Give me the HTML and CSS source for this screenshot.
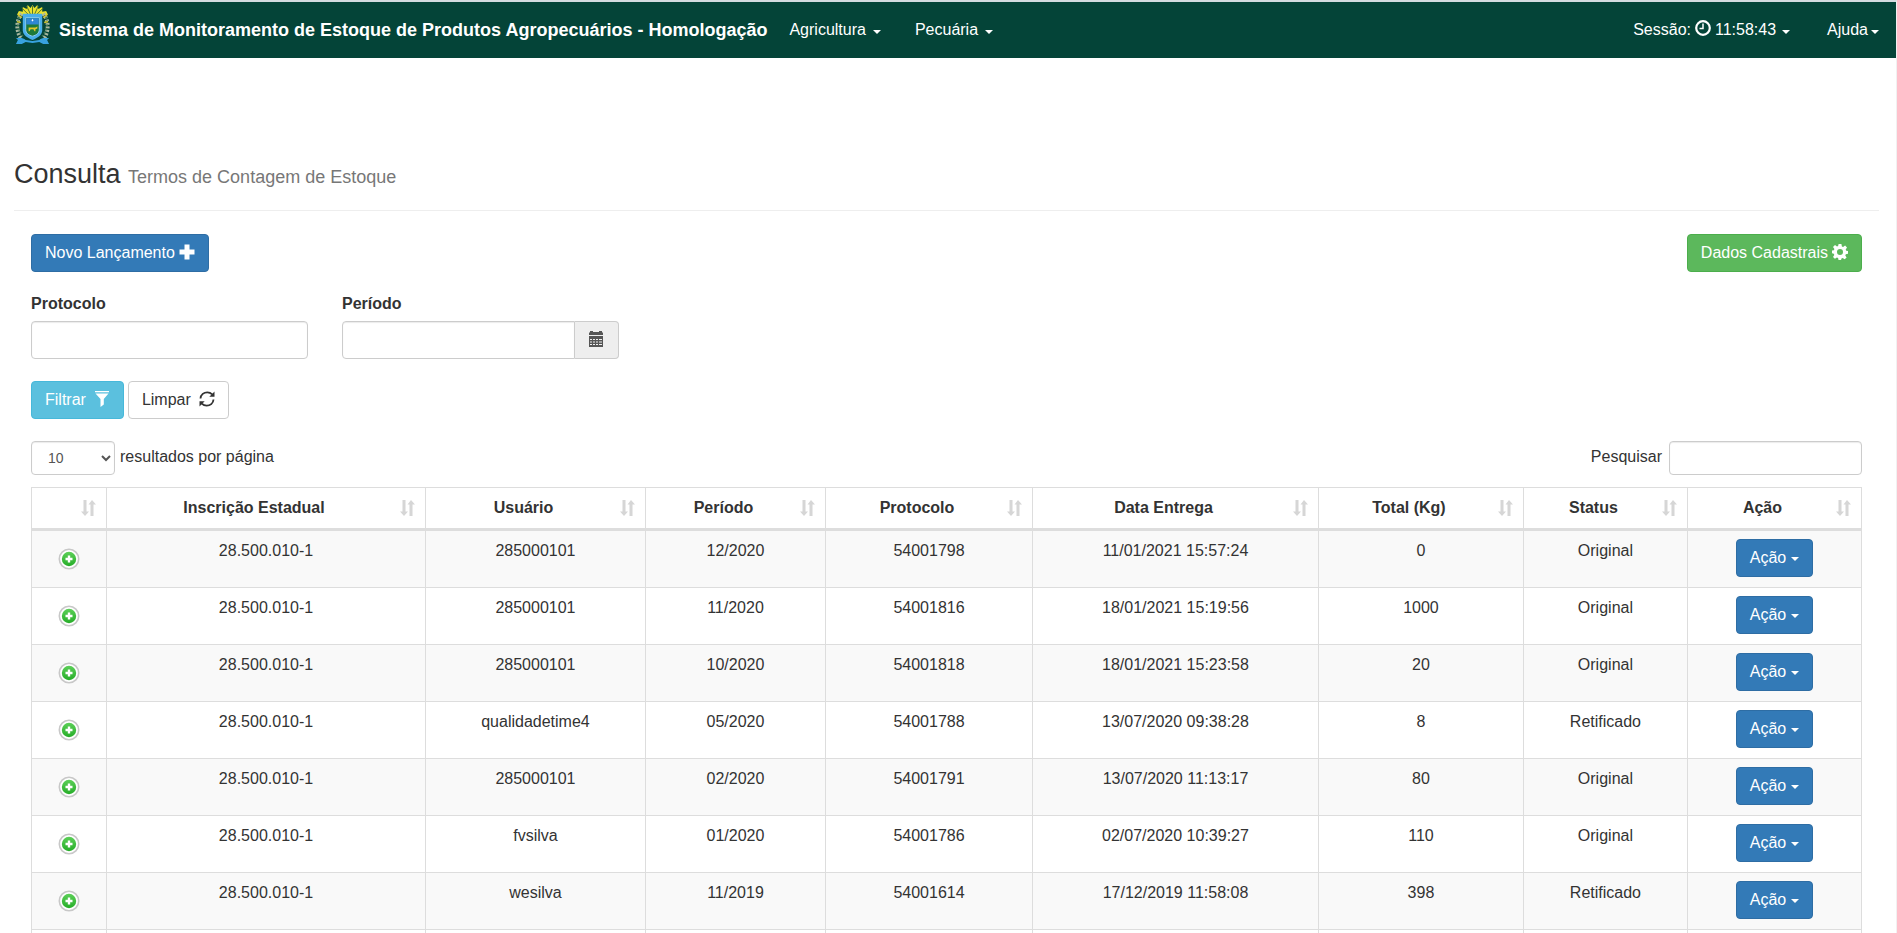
FILE: index.html
```
<!DOCTYPE html>
<html lang="pt-BR">
<head>
<meta charset="utf-8">
<title>Consulta - Termos de Contagem de Estoque</title>
<link rel="stylesheet" href="styles.css">
</head>
<body>
<svg class="sprite" aria-hidden="true">
  <symbol id="sort" viewBox="0 0 15 16"><path d="M2.500 0h3v11.500H8L4 16 0 11.500h2.500zM9.500 16h3V4.500H15L11 0 7.500 4.500h2z"/></symbol>
  <symbol id="more" viewBox="0 0 22 22">
    <circle cx="11" cy="11" r="9.700" fill="#fff" stroke="#c8c8c8" stroke-width="1.600"/>
    <circle cx="11" cy="11" r="7.200" fill="url(#green)"/>
    <path d="M9.800 7.500h2.400v2.300h2.300v2.400h-2.300v2.300H9.800v-2.300H7.500V9.800h2.300z" fill="#fff"/>
  </symbol>
  <linearGradient id="green" x1="0" y1="0" x2="0" y2="1"><stop offset="0" stop-color="#5ccf58"/><stop offset="1" stop-color="#26ad28"/></linearGradient>
</svg>

<header class="navbar">
  <a class="brand" href="#">
    <svg class="crest" viewBox="0 0 36 40" aria-hidden="true">
      <path d="M18 12 2 10l2-4 4 1 0-5 4 2 1-4 3 3 2-3 2 3 3-3 1 4 4-2 0 5 4-1 2 4z" fill="#e9e22f"/>
      <path d="M18 14 7 3M18 14 12 1M18 14V1M18 14 24 1M18 14 29 3" stroke="#55752c" stroke-width="1"/>
      <path d="M7 9C1 15 1 27 6 34M29 9c6 6 6 18 1 25" fill="none" stroke="#a9b8a0" stroke-width="4" stroke-dasharray="2 1.500"/>
      <path d="M4 12c-2 8-1 14 4 20M32 12c2 8 1 14-4 20" fill="none" stroke="#3d7553" stroke-width="2" stroke-dasharray="2 2"/>
      <path d="M3 10l4 3M29 13l4-3M2 17l4 1M30 18l4-1" stroke="#d5c52c" stroke-width="1.500"/>
      <path d="M1 34c4 0 7-1 10 2l7 1 7-1c3-3 6-2 10-2l-2 2 2 4h-6l-4-2-7 1-7-1-4 2H1l2-4z" fill="#38a2df"/>
      <path d="M8 9h20v17c0 5-5 8-10 10-5-2-10-5-10-10z" fill="#48aeea"/>
      <path d="M11 13h14v12c0 4-3 6-7 7-4-1-7-3-7-7z" fill="#1d7a3b" stroke="#8fcdf2"/>
      <path d="M11.500 13.500h13V20h-13z" fill="#2f87d3"/>
      <path d="M14 23h7l2-1v2l-2 1v2h-1l-1-2h-3l-1 2h-1z" fill="#e0c727"/>
      <path d="m18 14 1 2-1 1-1-1z" fill="#fff"/>
    </svg>
    <span>Sistema de Monitoramento de Estoque de Produtos Agropecuários - Homologação</span>
  </a>
  <nav class="menu">
    <a href="#">Agricultura <i class="caret"></i></a>
    <a href="#">Pecuária <i class="caret"></i></a>
  </nav>
  <nav class="menu menu-right">
    <a href="#">Sessão:
      <svg class="clock" viewBox="0 0 16 16" aria-hidden="true"><circle cx="8" cy="8" r="6.800" fill="none" stroke="#fff" stroke-width="2.200"/><path d="M8 3.500V8.500H4.500" fill="none" stroke="#fff" stroke-width="1.500"/></svg>
      11:58:43 <i class="caret"></i></a>
    <a class="tight" href="#">Ajuda<i class="caret"></i></a>
  </nav>
</header>

<main>
  <h1>Consulta <small>Termos de Contagem de Estoque</small></h1>
  <div class="content">
    <div class="bar">
      <button class="btn primary" type="button">Novo Lançamento
        <svg class="icon" viewBox="0 0 16 16" aria-hidden="true"><path d="M5.500 .5h5v5h5v5h-5v5h-5v-5h-5v-5h5z"/></svg></button>
      <button class="btn success" type="button">Dados Cadastrais
        <svg class="icon" viewBox="0 0 16 16" aria-hidden="true"><path fill-rule="evenodd" d="M6.600 0h2.800l.5 2.400 1.200.5 2-1.400 1.900 2-1.300 2 .5 1.200 1.800.4v2.600l-2.200.5-.5 1.200 1.300 2-1.900 1.900-2-1.300-1.200.5L9 16H6.500l-.4-2-1.200-.5-2 1.300L1 13l1.300-2-.5-1.200L0 9.300V6.600l1.900-.4.5-1.200L1 3l2-2 2 1.400 1.100-.5zM8 5a3 3 0 1 0 0 6 3 3 0 0 0 0-6z"/></svg></button>
    </div>

    <form>
      <div class="fields">
        <div class="field"><label for="protocolo">Protocolo</label><input class="control" id="protocolo" type="text"></div>
        <div class="field"><label for="periodo">Período</label>
          <div class="group"><input class="control" id="periodo" type="text">
            <button class="addon" type="button" aria-label="Abrir calendário"><svg class="icon" viewBox="0 0 16 16" aria-hidden="true"><path fill-rule="evenodd" d="M1 4V2l1-1V0h3v1h6V0h3v1l1 1v2zM1 5h14v11H1zM2 8v1h2V8zM5 8v1h2V8zM8 8v1h2V8zM11 8v1h3V8zM2 10.500v1h2v-1zM5 10.500v1h2v-1zM8 10.500v1h2v-1zM11 10.500v1h3v-1zM2 13v1h2v-1zM5 13v1h2v-1zM8 13v1h2v-1zM11 13v1h3v-1z"/></svg></button>
          </div>
        </div>
      </div>
      <div class="actions">
        <button class="btn info" type="button">Filtrar
          <svg class="icon spaced" viewBox="0 0 16 16" aria-hidden="true"><path d="M1 0h14v1.200H1zM1.500 2.500h13L9.800 8v5.500L6.500 16V8z"/></svg></button>
        <button class="btn plain" type="reset">Limpar
          <svg class="icon spaced" viewBox="0 0 16 16" aria-hidden="true"><path d="M1.500 7.500C1.700 3.500 5 1.300 8.300 1.300c2 0 3.700.8 4.900 2M14.500 8.500c-.2 4-3.500 6.200-6.800 6.200-2 0-3.700-.8-4.900-2" fill="none" stroke="#333" stroke-width="1.800"/><path d="M15.500 .5v5.200h-5.200zM.5 15.500v-5.200h5.200z"/></svg></button>
      </div>
    </form>

    <div class="bar tools">
      <label>
        <select class="small-control"><option>10</option><option>25</option><option>50</option></select>
        <span>resultados por página</span></label>
      <label class="search"><span>Pesquisar</span> <input class="small-control" type="search"></label>
    </div>

    <table>
      <colgroup><col class="c-more"><col class="c-insc"><col class="c-user"><col class="c-per"><col class="c-prot"><col class="c-date"><col class="c-total"><col class="c-status"><col class="c-action"></colgroup>
      <thead><tr>
        <th><div><span></span><svg><use href="#sort"/></svg></div></th>
        <th><div><span>Inscrição Estadual</span><svg><use href="#sort"/></svg></div></th>
        <th><div><span>Usuário</span><svg><use href="#sort"/></svg></div></th>
        <th><div><span>Período</span><svg><use href="#sort"/></svg></div></th>
        <th><div><span>Protocolo</span><svg><use href="#sort"/></svg></div></th>
        <th><div><span>Data Entrega</span><svg><use href="#sort"/></svg></div></th>
        <th><div><span>Total (Kg)</span><svg><use href="#sort"/></svg></div></th>
        <th><div><span>Status</span><svg><use href="#sort"/></svg></div></th>
        <th><div><span>Ação</span><svg><use href="#sort"/></svg></div></th>
      </tr></thead>
      <tbody>
        <tr><td class="more"><svg><use href="#more"/></svg></td><td>28.500.010-1</td><td>285000101</td><td>12/2020</td><td>54001798</td><td>11/01/2021 15:57:24</td><td>0</td><td>Original</td><td><button class="btn primary action" type="button">Ação <i class="caret"></i></button></td></tr>
        <tr><td class="more"><svg><use href="#more"/></svg></td><td>28.500.010-1</td><td>285000101</td><td>11/2020</td><td>54001816</td><td>18/01/2021 15:19:56</td><td>1000</td><td>Original</td><td><button class="btn primary action" type="button">Ação <i class="caret"></i></button></td></tr>
        <tr><td class="more"><svg><use href="#more"/></svg></td><td>28.500.010-1</td><td>285000101</td><td>10/2020</td><td>54001818</td><td>18/01/2021 15:23:58</td><td>20</td><td>Original</td><td><button class="btn primary action" type="button">Ação <i class="caret"></i></button></td></tr>
        <tr><td class="more"><svg><use href="#more"/></svg></td><td>28.500.010-1</td><td>qualidadetime4</td><td>05/2020</td><td>54001788</td><td>13/07/2020 09:38:28</td><td>8</td><td>Retificado</td><td><button class="btn primary action" type="button">Ação <i class="caret"></i></button></td></tr>
        <tr><td class="more"><svg><use href="#more"/></svg></td><td>28.500.010-1</td><td>285000101</td><td>02/2020</td><td>54001791</td><td>13/07/2020 11:13:17</td><td>80</td><td>Original</td><td><button class="btn primary action" type="button">Ação <i class="caret"></i></button></td></tr>
        <tr><td class="more"><svg><use href="#more"/></svg></td><td>28.500.010-1</td><td>fvsilva</td><td>01/2020</td><td>54001786</td><td>02/07/2020 10:39:27</td><td>110</td><td>Original</td><td><button class="btn primary action" type="button">Ação <i class="caret"></i></button></td></tr>
        <tr><td class="more"><svg><use href="#more"/></svg></td><td>28.500.010-1</td><td>wesilva</td><td>11/2019</td><td>54001614</td><td>17/12/2019 11:58:08</td><td>398</td><td>Retificado</td><td><button class="btn primary action" type="button">Ação <i class="caret"></i></button></td></tr>
        <tr><td></td><td></td><td></td><td></td><td></td><td></td><td></td><td></td><td></td></tr>
      </tbody>
    </table>
  </div>
</main>
</body>
</html>
```
FILE: styles.css
```
* { box-sizing: border-box; }
body {
  margin: 0;
  height: 100vh;
  overflow: hidden;
  border-top: 2px solid #d5dce0;
  border-right: 1px solid #f1f1f1;
  font: 16px/23px "Liberation Sans", Arial, sans-serif;
  color: #333;
  background: #fff;
}
button, input, select { font: inherit; color: inherit; }
.sprite { position: absolute; width: 0; height: 0; }

.navbar {
  display: flex;
  height: 56px;
  padding: 0 17px 0 15px;
  background: #044438;
}
.navbar a { color: #fff; text-decoration: none; }
.brand { display: flex; gap: 9px; font-size: 18px; font-weight: bold; line-height: 56px; white-space: nowrap; }
.crest { width: 35px; height: 39px; margin-top: 3px; }
.menu { display: flex; gap: 34px; margin-left: 22px; line-height: 56px; white-space: nowrap; }
.menu a { display: flex; align-items: center; gap: 7px; height: 56px; }
.menu-right { margin-left: auto; gap: 37px; }
.menu-right a { gap: 4px; }
.menu-right .tight { gap: 3px; }
.menu-right a:first-child .caret { margin-left: 2px; }
.clock { width: 16px; height: 16px; margin-top: -4px; }
.caret {
  display: inline-block;
  margin-top: 3px;
  border-top: 4px solid;
  border-left: 4px solid transparent;
  border-right: 4px solid transparent;
}

main { padding: 0 17px 0 14px; }
h1 {
  margin: 98px 0 23px;
  padding-bottom: 14px;
  border-bottom: 1px solid #eee;
  font-size: 27px;
  font-weight: normal;
  line-height: 37px;
}
h1 small { font-size: 18px; color: #777; }
.content { padding: 0 17px; }
.bar { display: flex; justify-content: space-between; }

.btn {
  display: inline-flex;
  align-items: center;
  gap: 4px;
  height: 38px;
  padding: 0 13px 2px;
  border: 1px solid #ccc;
  border-radius: 4px;
  white-space: nowrap;
}
.icon { width: 16px; height: 16px; fill: currentColor; }
.spaced { margin-left: 4px; }
.primary { color: #fff; background: #337ab7; border-color: #2e6da4; }
.success { color: #fff; background: #5cb85c; border-color: #4cae4c; }
.info { color: #fff; background: #5bc0de; border-color: #46b8da; }
.plain { background: #fff; }

.fields { display: flex; gap: 34px; margin-top: 20px; }
.field { width: 277px; }
.field label { display: block; margin-bottom: 6px; font-weight: bold; }
.control, .small-control {
  width: 100%;
  border: 1px solid #ccc;
  border-radius: 4px;
  background: #fff;
  box-shadow: inset 0 1px 1px #ececec;
}
.control { display: block; height: 38px; padding: 6px 12px; }
.group { display: flex; }
.group .control { flex: 1; width: 0; border-radius: 4px 0 0 4px; }
.addon {
  display: flex;
  align-items: center;
  justify-content: center;
  width: 44px;
  padding: 0 2px 2px 0;
  border: 1px solid #ccc;
  border-left: 0;
  border-radius: 0 4px 4px 0;
  background: #eee;
  color: #555;
}
.actions { display: flex; gap: 4px; margin: 22px 0; }

.tools { margin-bottom: 12px; }
.tools label { display: flex; align-items: center; gap: 5px; height: 34px; }
.tools span { padding-bottom: 3px; }
.tools .small-control { height: 34px; }
.tools select { width: 84px; padding: 0 4px 0 12px; font-size: 14px; color: #555; }
.tools .search { gap: 7px; }
.tools .search input { width: 193px; padding: 5px 10px; }

table { width: 100%; table-layout: fixed; border-collapse: collapse; }
.c-more { width: 4.1%; }
.c-insc { width: 17.43%; }
.c-user { width: 12.02%; }
.c-per { width: 9.84%; }
.c-prot { width: 11.31%; }
.c-date { width: 15.63%; }
.c-total { width: 11.2%; }
.c-status { width: 8.96%; }
.c-action { width: 9.51%; }
th, td { border: 1px solid #ddd; text-align: center; vertical-align: top; }
th { padding: 8px 10px 9px 8px; border-bottom-width: 3px; }
th div { display: flex; align-items: center; gap: 7px; height: 23px; }
th span { flex: 1; white-space: nowrap; }
th svg { width: 15px; height: 16px; fill: #d6d6d6; }
td { height: 57px; padding: 8px; }
tbody tr:first-child td { height: 58px; }
tbody tr:nth-child(odd) { background: #f9f9f9; }
.more { vertical-align: middle; }
.more svg { display: block; width: 22px; height: 22px; margin: 0 auto; }
.action { padding-bottom: 1px; gap: 5px; }
```
